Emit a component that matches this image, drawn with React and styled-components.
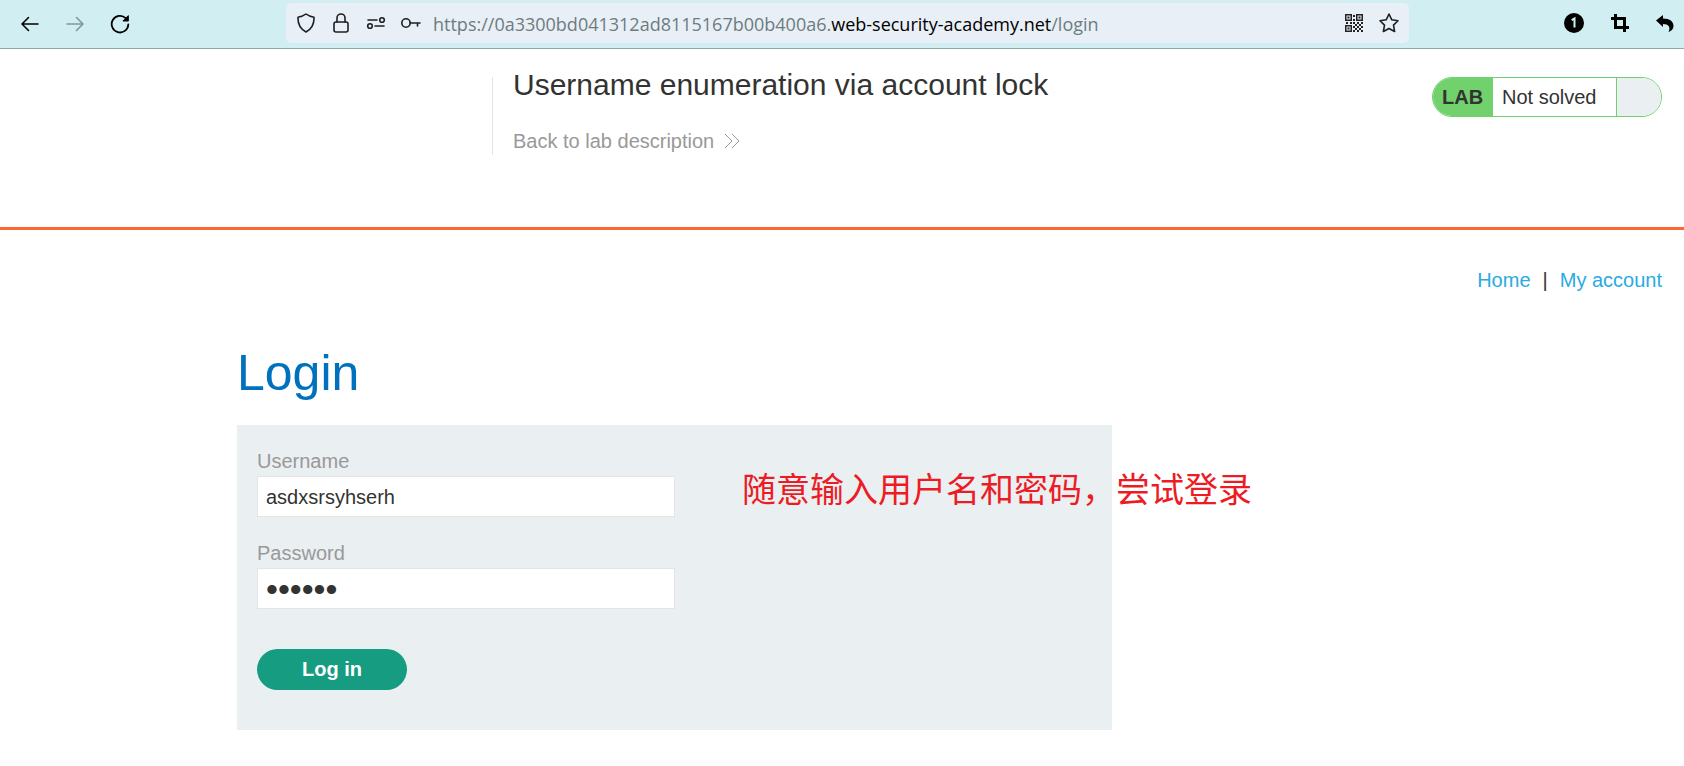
import React from "react";
import styled, { createGlobalStyle } from "styled-components";

const GlobalStyle = createGlobalStyle`
  *, *::before, *::after { box-sizing: border-box; }
  body {
    margin: 0;
    background: #fff;
    color: #333332;
    font: 20px/24px "Liberation Sans", Arial, sans-serif;
  }
`;

const BrowserBar = styled.header`
  display: grid;
  grid-template-columns: 286px minmax(0, 1fr) 275px;
  align-items: center;
  height: 49px;
  padding-bottom: 2px;
  background: #d1eef2;
  border-bottom: 1px solid #93a7ab;
`;

const Tools = styled.div`
  display: flex;
  align-items: center;
  justify-content: ${(p) => (p.$end ? "flex-end" : "flex-start")};
  gap: ${(p) => p.$gap}px;
  padding: ${(p) => p.$pad || "0"};
`;

const IconButton = styled.button`
  display: flex;
  padding: 0;
  border: 0;
  background: none;
  color: ${(p) => p.$color || "#000"};
`;

const AddressBar = styled.div`
  display: flex;
  align-items: center;
  height: 40px;
  padding: 0 10px;
  background: #e9eff6;
  border-radius: 5px;
`;

const Url = styled.div`
  flex: 1;
  min-width: 0;
  overflow: hidden;
  padding: 2px 0 0 12px;
  color: #6d7c80;
  font: 18px/28px "Open Sans", "Noto Sans", sans-serif;
  white-space: nowrap;
`;

const Host = styled.span`
  color: #000;
`;

const LabHeader = styled.section`
  display: flex;
  justify-content: space-between;
  align-items: flex-start;
  height: 181px;
  padding: 28px 22px 0 492px;
  border-bottom: 3px solid #ff6633;
`;

const LabTitle = styled.div`
  display: flex;
  flex-direction: column;
  gap: 26px;
  height: 78px;
  padding-left: 20px;
  border-left: 1px solid #e4e4e4;
`;

const Title = styled.h2`
  margin: -10px 0 0;
  font-size: 30px;
  font-weight: 400;
  line-height: 36px;
`;

const BackLink = styled.a`
  display: flex;
  align-items: center;
  gap: 10px;
  color: #999;
  line-height: 24px;
  text-decoration: none;
`;

const LabStatus = styled.div`
  display: flex;
  width: 230px;
  height: 40px;
  overflow: hidden;
  line-height: 38px;
  border: 1px solid #71d16d;
  border-radius: 20px;
`;

const LabTag = styled.strong`
  width: 60px;
  padding-left: 9px;
  background: #71d16d;
`;

const LabState = styled.span`
  flex: 1;
  padding-left: 9px;
`;

const LabEnd = styled.span`
  width: 45px;
  background: #eaeff2;
  border-left: 1px solid #71d16d;
`;

const TopNav = styled.nav`
  display: flex;
  justify-content: flex-end;
  gap: 12px;
  padding: 38px 22px 0;
`;

const NavLink = styled.a`
  color: #29abe2;
  text-decoration: none;
`;

const Main = styled.main`
  max-width: 1210px;
  margin: 0 auto;
  padding-bottom: 36px;
`;

const Heading = styled.h1`
  margin: 0;
  padding: 51px 0 22px;
  color: #0071bc;
  font-size: 50px;
  font-weight: 400;
  line-height: 60px;
`;

const LoginForm = styled.form`
  position: relative;
  max-width: 875px;
  padding: 24px 20px 40px;
  background: #eaeff2;
`;

const Field = styled.div`
  display: flex;
  flex-direction: column;
  gap: 3px;
  margin-bottom: 24px;
`;

const Label = styled.label`
  color: #999;
`;

const Input = styled.input`
  width: 50%;
  height: 41px;
  padding: 2px 8px 0;
  border: 1px solid #e4e4e4;
  border-radius: 0;
  background: #fff;
  color: #333332;
  font: inherit;
  font-size: ${(p) => (p.type === "password" ? 34 : 20)}px;
`;

const SubmitButton = styled.button`
  display: block;
  width: 150px;
  height: 41px;
  margin-top: 40px;
  padding: 0 0 2px;
  border: 0;
  border-radius: 21px;
  background: #169c80;
  color: #fff;
  font: inherit;
  font-weight: 700;
`;

const Annotation = styled.p`
  position: absolute;
  top: 38px;
  left: 505px;
  margin: 0;
  color: #ed1c24;
  font: 34px/50px "Noto Sans CJK SC", sans-serif;
  white-space: nowrap;
`;

const Stroke = ({ size = 20, width = 1.6, children }) => (
  <svg width={size} height={size} viewBox="0 0 20 20" fill="none" stroke="currentColor"
    strokeWidth={width} strokeLinecap="round" strokeLinejoin="round" aria-hidden="true">
    {children}
  </svg>
);

const QR_CELLS = [
  [8, 1], [8, 5], [1, 8], [5, 8],
  [8, 8], [12, 8], [16, 8],
  [10, 10], [14, 10],
  [8, 12], [12, 12], [16, 12],
  [10, 14], [14, 14],
  [8, 16], [12, 16], [16, 16],
];

const QrIcon = () => (
  <svg width="18" height="18" viewBox="0 0 18 18" aria-hidden="true">
    {[[0, 0], [11, 0], [0, 11]].map(([x, y]) => (
      <g key={`${x}-${y}`}>
        <rect x={x + 0.75} y={y + 0.75} width="5.500" height="5.500" fill="none" stroke="#222" strokeWidth="1.500" />
        <rect x={x + 2.5} y={y + 2.5} width="2" height="2" fill="#222" />
      </g>
    ))}
    {QR_CELLS.map(([x, y]) => (
      <rect key={`${x}-${y}`} x={x} y={y} width="2" height="2" fill="#222" />
    ))}
  </svg>
);

export default function App() {
  return (
    <>
      <GlobalStyle />
      <BrowserBar>
        <Tools $gap={25} $pad="2px 0 0 20px">
          <IconButton aria-label="Back">
            <Stroke><path d="M18 10H2M8.500 3.500L2 10l6.500 6.500" /></Stroke>
          </IconButton>
          <IconButton aria-label="Forward" $color="#829598">
            <Stroke><path d="M2 10H18M11.500 3.500L18 10l-6.500 6.500" /></Stroke>
          </IconButton>
          <IconButton aria-label="Reload">
            <Stroke width={1.8}>
              <path d="M18.300 10.500a8.300 8.300 0 1 1-2.600-6.400" />
              <path d="M18.300 2v5h-5z" fill="currentColor" strokeWidth="1" />
            </Stroke>
          </IconButton>
        </Tools>
        <AddressBar>
          <Tools $gap={15}>
            <IconButton aria-label="Tracking protection" $color="#1c2022">
              <Stroke><path d="M10 1c2.500 2 5 2.700 8 3.200.3 6.500-2.500 12-8 14.800C4.500 16.200 1.700 10.700 2 4.200 5 3.700 7.500 3 10 1z" /></Stroke>
            </IconButton>
            <IconButton aria-label="Site information" $color="#1c2022">
              <Stroke>
                <rect x="3" y="9" width="14" height="10" rx="2" />
                <path d="M6 9V5a4 4 0 0 1 8 0v4" />
              </Stroke>
            </IconButton>
            <IconButton aria-label="Permissions" $color="#1c2022">
              <Stroke>
                <path d="M2 7h9M9 13h9" />
                <circle cx="16" cy="7" r="2.300" />
                <circle cx="4" cy="13" r="2.300" />
              </Stroke>
            </IconButton>
            <IconButton aria-label="Saved login" $color="#1c2022">
              <Stroke>
                <circle cx="5" cy="10" r="4.200" />
                <path d="M9.200 10H19M16.500 10v3" />
              </Stroke>
            </IconButton>
          </Tools>
          <Url>
            https://0a3300bd041312ad8115167b00b400a6.<Host>web-security-academy.net</Host>/login
          </Url>
          <Tools $gap={16}>
            <IconButton aria-label="QR code"><QrIcon /></IconButton>
            <IconButton aria-label="Bookmark" $color="#1c2022">
              <Stroke>
                <path d="M10 1l2.800 5.800 6.200.9-4.500 4.400 1.100 6.400-5.600-3-5.600 3 1.100-6.400L1 7.700l6.200-.9z" />
              </Stroke>
            </IconButton>
          </Tools>
        </AddressBar>
        <Tools $end $gap={26} $pad="0 10px 0 0">
          <IconButton aria-label="One notification">
            <svg width="20" height="20" viewBox="0 0 20 20" aria-hidden="true">
              <circle cx="10" cy="10" r="10" />
              <path d="M7.700 7.200l2.800-1.700V14.500" fill="none" stroke="#d1eef2" strokeWidth="2" />
            </svg>
          </IconButton>
          <IconButton aria-label="Crop">
            <svg width="20" height="20" viewBox="0 0 20 20" fill="none" stroke="#000" strokeWidth="3" aria-hidden="true">
              <path d="M1 5.500h13.500V19M5.500 1v13.500H19" />
            </svg>
          </IconButton>
          <IconButton aria-label="Undo">
            <svg width="18" height="18" viewBox="0 0 18 18" aria-hidden="true">
              <path d="M0 6.500L7 1v3.500c7 0 10.500 3 10.500 7.500 0 3-2 5-5 6 2.500-4.500 0-8-5.500-8v3z" />
            </svg>
          </IconButton>
        </Tools>
      </BrowserBar>
      <LabHeader>
        <LabTitle>
          <Title>Username enumeration via account lock</Title>
          <BackLink href="#lab">
            Back to lab description
            <svg width="16" height="16" viewBox="0 0 16 16" fill="none" stroke="#999" aria-hidden="true">
              <path d="M1 1l7 7-7 7M8 1l7 7-7 7" />
            </svg>
          </BackLink>
        </LabTitle>
        <LabStatus>
          <LabTag>LAB</LabTag>
          <LabState>Not solved</LabState>
          <LabEnd />
        </LabStatus>
      </LabHeader>
      <TopNav>
        <NavLink href="#home">Home</NavLink>
        <span>|</span>
        <NavLink href="#account">My account</NavLink>
      </TopNav>
      <Main>
        <Heading>Login</Heading>
        <LoginForm onSubmit={(e) => e.preventDefault()}>
          <Field>
            <Label htmlFor="username">Username</Label>
            <Input id="username" type="text" defaultValue="asdxsrsyhserh" />
          </Field>
          <Field>
            <Label htmlFor="password">Password</Label>
            <Input id="password" type="password" defaultValue="secret" />
          </Field>
          <SubmitButton type="submit">Log in</SubmitButton>
          <Annotation lang="zh-CN">随意输入用户名和密码，尝试登录</Annotation>
        </LoginForm>
      </Main>
    </>
  );
}
